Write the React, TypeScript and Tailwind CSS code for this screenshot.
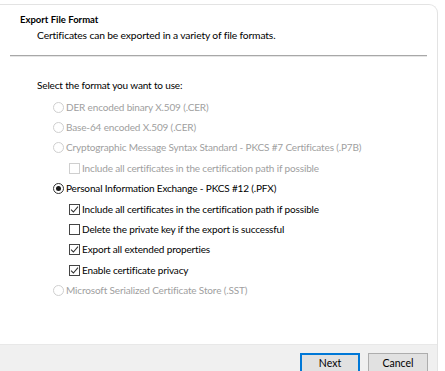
import { useState } from "react";

type Item =
  | { kind: "radio"; id: string; label: string; disabled?: boolean }
  | { kind: "check"; id: string; label: string; disabled?: boolean };

const items: Item[] = [
  { kind: "radio", id: "der", label: "DER encoded binary X.509 (.CER)", disabled: true },
  { kind: "radio", id: "b64", label: "Base-64 encoded X.509 (.CER)", disabled: true },
  { kind: "radio", id: "p7b", label: "Cryptographic Message Syntax Standard - PKCS #7 Certificates (.P7B)", disabled: true },
  { kind: "check", id: "p7b-all", label: "Include all certificates in the certification path if possible", disabled: true },
  { kind: "radio", id: "pfx", label: "Personal Information Exchange - PKCS #12 (.PFX)" },
  { kind: "check", id: "pfx-all", label: "Include all certificates in the certification path if possible" },
  { kind: "check", id: "pfx-del", label: "Delete the private key if the export is successful" },
  { kind: "check", id: "pfx-ext", label: "Export all extended properties" },
  { kind: "check", id: "pfx-priv", label: "Enable certificate privacy" },
  { kind: "radio", id: "sst", label: "Microsoft Serialized Certificate Store (.SST)", disabled: true },
];

function Radio({ checked, disabled }: { checked: boolean; disabled?: boolean }) {
  return (
    <span
      className={`flex h-[11px] w-[11px] shrink-0 items-center justify-center rounded-full border bg-white ${
        disabled ? "border-[#cfcfcf]" : "border-[#333333]"
      }`}
    >
      {checked && <span className="h-[5px] w-[5px] rounded-full bg-[#1a1a1a]" />}
    </span>
  );
}

function Check({ checked, disabled }: { checked: boolean; disabled?: boolean }) {
  return (
    <span
      className={`flex h-[11px] w-[11px] shrink-0 items-center justify-center border bg-white ${
        disabled ? "border-[#cfcfcf]" : "border-[#444444]"
      }`}
    >
      {checked && (
        <svg width="9" height="9" viewBox="0 0 9 9" fill="none">
          <path d="M1 4.6 L3.4 7 L8 1.6" stroke="#333333" strokeWidth="1.1" />
        </svg>
      )}
    </span>
  );
}

export default function App() {
  const [format, setFormat] = useState("pfx");
  const [checks, setChecks] = useState<Record<string, boolean>>({
    "pfx-all": true,
    "pfx-del": false,
    "pfx-ext": true,
    "pfx-priv": true,
  });

  return (
    <div
      className="h-[371px] w-[445px] overflow-hidden bg-white pt-[4px] text-[10px] tracking-[-0.15px] text-black"
      style={{ fontFamily: '"Segoe UI", Lato, sans-serif' }}
    >
      <div className="flex h-[400px] w-[438px] flex-col overflow-hidden rounded-tr-[9px] border-r border-t border-[#e3e3e3] bg-white">
        {/* Header */}
        <div className="pl-[20px] pt-[8px]">
          <div className="text-[9.5px] font-bold leading-[14px] tracking-normal">Export File Format</div>
          <div className="pl-[17px] text-[10.3px] leading-[16px]">Certificates can be exported in a variety of file formats.</div>
        </div>
        <div className="ml-[10px] mt-[12px] w-[417px] border-t border-b border-t-[#a8a8a8] border-b-[#e6e6e6]" />

        {/* Body */}
        <div className="pl-[37px] pt-[20px]">
          <div className="leading-[16px]">Select the format you want to use:</div>
          <div className="mt-[4px] flex flex-col">
            {items.map((it) => {
              const on = it.kind === "radio" ? format === it.id : !!checks[it.id];
              return (
                <div
                  key={it.id}
                  onClick={() => {
                    if (it.disabled) return;
                    if (it.kind === "radio") setFormat(it.id);
                    else setChecks((c) => ({ ...c, [it.id]: !c[it.id] }));
                  }}
                  className={`flex h-[20.4px] items-center gap-[2px] ${it.kind === "check" ? "pl-[32px]" : "pl-[16px]"} ${
                    it.disabled ? "text-[#a0a0a0]" : ""
                  }`}
                >
                  {it.kind === "radio" ? (
                    <Radio checked={on} disabled={it.disabled} />
                  ) : (
                    <Check checked={on} disabled={it.disabled} />
                  )}
                  <span className="whitespace-nowrap">{it.label}</span>
                </div>
              );
            })}
          </div>
        </div>

        {/* Footer */}
        <div className="mt-[43px] flex h-[60px] items-start justify-end gap-[8px] border-t border-[#e8e8e8] bg-[#f0f0f0] pr-[9px] pt-[8px]">
          <button className="h-[22px] w-[60px] border-2 border-[#0078d7] bg-[#e1e1e1] text-[10.5px] tracking-normal">Next</button>
          <button className="h-[22px] w-[60px] border border-[#adadad] bg-[#e1e1e1] text-[10.5px] tracking-normal">Cancel</button>
        </div>
      </div>
    </div>
  );
}
